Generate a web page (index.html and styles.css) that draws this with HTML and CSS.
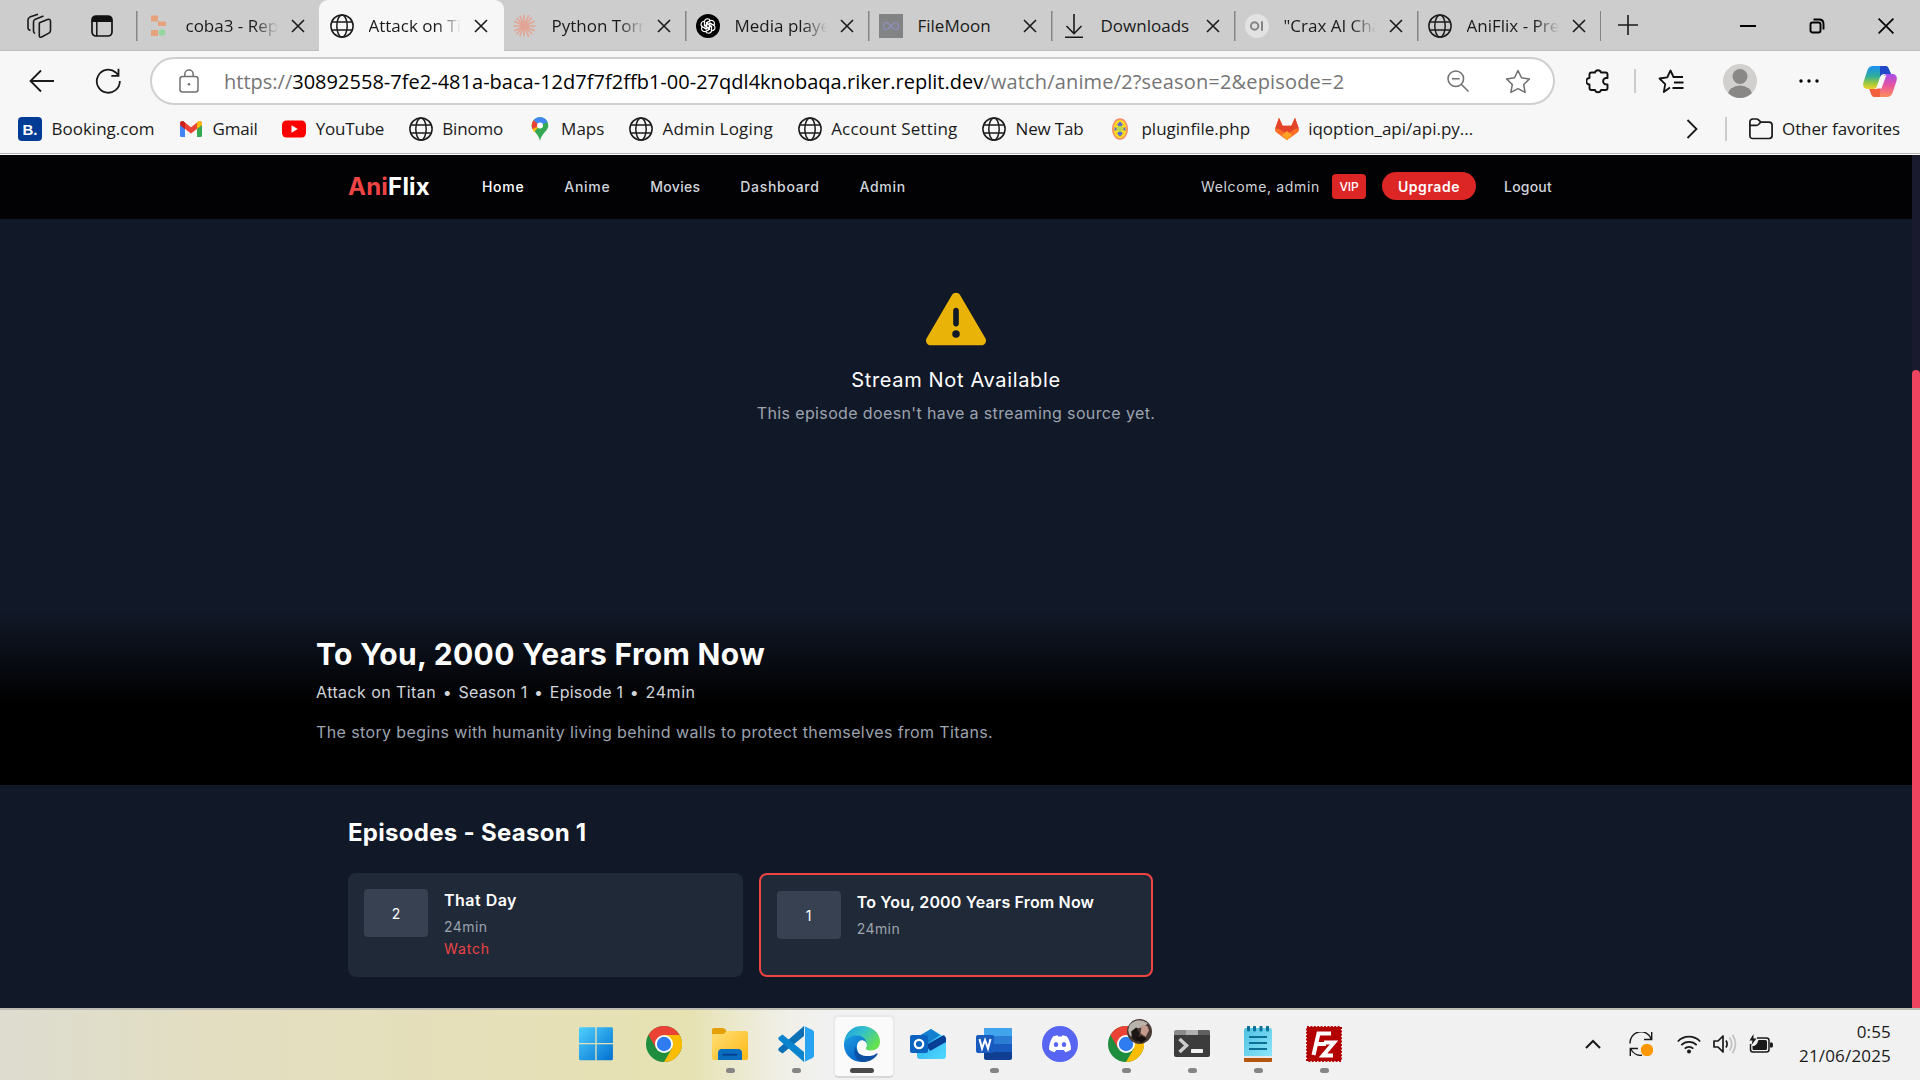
FILE: index.html
```html
<!DOCTYPE html>
<html lang="en">
<head>
<meta charset="utf-8">
<title>AniFlix</title>
<link rel="stylesheet" href="styles.css">
</head>
<body>
<svg width="0" height="0" class="defs">
  <defs>
    <linearGradient id="gWin" x1="0" y1="0" x2="1" y2="1"><stop offset="0" stop-color="#4fd0ff"/><stop offset="1" stop-color="#0270d0"/></linearGradient>
    <linearGradient id="gFolder" x1="0" y1="0" x2="1" y2="1"><stop offset="0" stop-color="#ffdf78"/><stop offset="1" stop-color="#fdb813"/></linearGradient>
    <linearGradient id="gEdgeTop" x1="0" y1="0" x2="1" y2=".6"><stop offset="0" stop-color="#1899e0"/><stop offset=".5" stop-color="#35c1c9"/><stop offset="1" stop-color="#66e04c"/></linearGradient>
    <linearGradient id="gEdgeLeft" x1="0" y1="0" x2=".6" y2="1"><stop offset="0" stop-color="#1b9de2"/><stop offset="1" stop-color="#0663c7"/></linearGradient>
    <linearGradient id="gOutlook" x1="0" y1="0" x2="1" y2="1"><stop offset="0" stop-color="#28a8ea"/><stop offset="1" stop-color="#50d9ff"/></linearGradient>
    <linearGradient id="gPad" x1="0" y1="0" x2="1" y2="1"><stop offset="0" stop-color="#4fc0e2"/><stop offset="1" stop-color="#8ce6fa"/></linearGradient>
    <linearGradient id="gCopA" x1="0" y1="0" x2="0" y2="1"><stop offset="0" stop-color="#1a8ff0"/><stop offset=".45" stop-color="#2fae9a"/><stop offset=".75" stop-color="#9fc93c"/><stop offset="1" stop-color="#f3d02a"/></linearGradient>
    <linearGradient id="gCopB" x1="0" y1="0" x2="0" y2="1"><stop offset="0" stop-color="#a44cf0"/><stop offset=".5" stop-color="#e8559c"/><stop offset="1" stop-color="#fb8f5a"/></linearGradient>
    <symbol id="globe" viewBox="0 0 24 24"><g fill="none" stroke="#1b1b1b" stroke-width="1.5"><circle cx="12" cy="12" r="11.1"/><ellipse cx="12" cy="12" rx="5.2" ry="11.1"/><path d="M1.8 8h20.4M1.8 16h20.4"/></g></symbol>
    <symbol id="close" viewBox="0 0 14 14"><path d="M1 1l12 12M13 1L1 13" fill="none" stroke="#1a1a1a" stroke-width="1.6"/></symbol>
    <symbol id="chrome" viewBox="0 0 36 36"><circle cx="18" cy="18" r="18" fill="#1e8e3e"/><path d="M18 9h15.6A18 18 0 0 1 18 36l7.8-13.5z" fill="#fbbc04"/><path d="M2.4 9L10.2 22.5L18 18L18 9H33.6A18 18 0 0 0 2.4 9z" fill="#ea4335"/><circle cx="18" cy="18" r="9" fill="#fff"/><circle cx="18" cy="18" r="7.2" fill="#2f7bf0"/></symbol>
  </defs>
</svg>

<header class="browser">
  <div class="tabstrip">
    <div class="strip-tools">
      <svg class="workspaces" width="26" height="26" viewBox="0 0 26 26" fill="none" stroke="#1a1a1a" stroke-width="1.6" stroke-linejoin="round"><path d="M12.500 9.200l8-3.300q3-.8 3 2v9q0 1.800-1.600 2.600l-7.300 3.900q-2.300 1-2.300-1.500V11q0-1.300.2-1.800z" transform="translate(1 .6)"/><path d="M9.200 20.500q-1.700-.3-1.700-2.500V9q0-2 1.800-2.800L17.500 3"/><path d="M4.500 17.500Q2 17 2 14.500V7q0-2 1.800-2.900L12 1.200"/></svg>
      <svg width="22" height="22" viewBox="0 0 22 22"><rect x="1" y="1" width="20" height="20" rx="4" fill="none" stroke="#111" stroke-width="1.7"/><path d="M1 7V5q0-4 4-4h12q4 0 4 4v2z" fill="#111"/><path d="M5.800 6v15" stroke="#111" stroke-width="1.5"/></svg>
    </div>
    <div class="tab first"><svg class="fav" viewBox="0 0 24 24"><path d="M4 1.500h7v6H4zM11 7.500h8v4.500h-8zM4 16h7v6H4z" fill="#e6a27c"/><circle cx="15" cy="18.500" r="3.300" fill="#93d6a0"/></svg><span class="t fade">coba3 - Replit</span><svg class="x"><use href="#close"/></svg></div>
    <div class="tab active"><svg class="fav"><use href="#globe"/></svg><span class="t fade">Attack on Titan</span><svg class="x"><use href="#close"/></svg></div>
    <div class="tab nosep"><svg class="fav" viewBox="0 0 24 24" stroke="#e2a595" stroke-width="1.7" stroke-linecap="round"><path d="M11 1.500v20M1 12h21M4 4.500l14.500 15M18.500 4L4 19.500M7 2l8.500 20M15.500 2L7 21.500M1.800 7.500l19.500 9M2 16.500L21 7.500"/></svg><span class="t fade">Python Torrent</span><svg class="x"><use href="#close"/></svg></div>
    <div class="tab"><svg class="fav" viewBox="0 0 24 24"><circle cx="12" cy="12" r="12" fill="#000"/><g fill="none" stroke="#fff" stroke-width="1.1"><path id="petal" d="M12 9.800l-3.600 2V7.600q.4-2.700 3-2.900 2.300.1 3 1.900l-3.800 2.200v3.900"/><use href="#petal" transform="rotate(60 12 12)"/><use href="#petal" transform="rotate(120 12 12)"/><use href="#petal" transform="rotate(180 12 12)"/><use href="#petal" transform="rotate(240 12 12)"/><use href="#petal" transform="rotate(300 12 12)"/></g></svg><span class="t fade">Media player</span><svg class="x"><use href="#close"/></svg></div>
    <div class="tab"><svg class="fav" viewBox="0 0 24 24"><rect width="24" height="24" fill="#828385"/><path d="M12 12q-2.500-3.500-5-3.500T4.500 12 7 15.500 12 12t5-3.500 2.500 3.500-2.500 3.500T12 12z" fill="none" stroke="#8f8fc4" stroke-width="1.2"/></svg><span class="t">FileMoon</span><svg class="x"><use href="#close"/></svg></div>
    <div class="tab"><svg class="fav" viewBox="0 0 24 24" fill="none" stroke="#1a1a1a" stroke-width="1.6"><path d="M12 0v19.500M4.500 12l7.500 7.700L19.500 12M3 23.200h18"/></svg><span class="t">Downloads</span><svg class="x"><use href="#close"/></svg></div>
    <div class="tab"><svg class="fav" viewBox="0 0 24 24"><circle cx="12" cy="12" r="12" fill="#e2e2e2"/><circle cx="9.600" cy="12" r="3.700" fill="none" stroke="#858585" stroke-width="2"/><path d="M17 7.300v9.400" stroke="#858585" stroke-width="2"/></svg><span class="t fade">"Crax AI Chat</span><svg class="x"><use href="#close"/></svg></div>
    <div class="tab last"><svg class="fav"><use href="#globe"/></svg><span class="t fade">AniFlix - Premium</span><svg class="x"><use href="#close"/></svg></div>
    <svg class="plus" viewBox="0 0 20 20"><path d="M10 0v20M0 10h20" stroke="#1a1a1a" stroke-width="1.6"/></svg>
    <div class="window-controls">
      <svg width="16" height="16" viewBox="0 0 16 16"><path d="M0 8h16" stroke="#000" stroke-width="2"/></svg>
      <svg width="16" height="16" viewBox="0 0 16 16" fill="none" stroke="#000" stroke-width="1.9"><rect x="1.500" y="4.500" width="10" height="10" rx="2"/><path d="M4.500 1.500H10q4.500 0 4.500 4.500v5.500"/></svg>
      <svg width="16" height="16" viewBox="0 0 16 16"><path d="M.6.6l14.800 14.800M15.400.6L.6 15.400" stroke="#000" stroke-width="1.7"/></svg>
    </div>
  </div>

  <div class="toolbar">
    <svg class="back" width="26" height="24" viewBox="0 0 26 24" fill="none" stroke="#1a1a1a" stroke-width="1.8"><path d="M25 12H2M12 1.500L1.500 12 12 22.500"/></svg>
    <svg class="reload" width="26" height="26" viewBox="0 0 26 26" fill="none" stroke="#1a1a1a" stroke-width="1.8"><path d="M24.800 13A11.500 11.500 0 1 1 20.800 4.500L23 7M23.500.8v7H16.300"/></svg>
    <div class="address">
      <svg class="lock" width="20" height="24" viewBox="0 0 20 24" fill="none" stroke="#707070" stroke-width="1.5"><rect x="1" y="7.500" width="18" height="15.500" rx="2.500"/><path d="M5.800 7.500V5.200a4.200 4.200 0 0 1 8.400 0v2.300"/><circle cx="10" cy="15.300" r="1.300" fill="#707070" stroke="none"/></svg>
      <div class="url"><span>https://</span><b>30892558-7fe2-481a-baca-12d7f7f2ffb1-00-27qdl4knobaqa.riker.replit.dev</b><span class="path">/watch/anime/2?season=2&amp;episode=2</span></div>
      <svg class="zoomout" width="22" height="22" viewBox="0 0 22 22" fill="none" stroke="#707070" stroke-width="1.5"><circle cx="8.800" cy="8.800" r="7.800"/><path d="M14.500 14.500l7 7M5 8.800h7.600"/></svg>
      <svg class="star" width="26" height="25" viewBox="0 0 26 25" fill="none" stroke="#707070" stroke-width="1.5" stroke-linejoin="round"><path d="M13 1.500l3.500 7.300 8 1.100-5.800 5.600 1.400 7.900L13 19.600l-7.100 3.800 1.400-7.900L1.500 9.900l8-1.100z"/></svg>
    </div>
    <svg class="ext" width="24" height="26" viewBox="0 0 24 26" fill="none" stroke="#111" stroke-width="1.9" stroke-linejoin="round"><path d="M5.500 4.500H9a3.100 3.100 0 0 1 6 0h4.500q2 0 2 2V10h-1.200a3.200 3.200 0 0 0 0 6.400h1.200v3.600q0 2-2 2H15a3.100 3.100 0 0 1-6 0H5.500q-2 0-2-2v-3.600a3.200 3.200 0 0 1 0-6.400V6.500q0-2 2-2z"/></svg>
    <i class="vsep"></i>
    <svg class="favs" width="26" height="25" viewBox="0 0 26 25" fill="none" stroke="#111" stroke-width="1.8" stroke-linejoin="round"><path d="M12 18.500L5.800 23l1.400-7.900L1.500 9.500l7.800-1.100L12.500 1.500l3 6.500h9.500M16 13.500h9.500M14.500 19h11"/></svg>
    <svg class="avatar" width="34" height="34" viewBox="0 0 34 34"><clipPath id="av"><circle cx="17" cy="17" r="17"/></clipPath><g clip-path="url(#av)"><rect width="34" height="34" fill="#d2d0ce"/><circle cx="17" cy="12.500" r="7.500" fill="#8a8886"/><ellipse cx="17" cy="31" rx="12" ry="9.500" fill="#8a8886"/></g></svg>
    <svg class="dots" width="20" height="4" viewBox="0 0 20 4"><circle cx="2" cy="2" r="1.700"/><circle cx="10" cy="2" r="1.700"/><circle cx="18" cy="2" r="1.700"/></svg>
    <svg class="copilot" width="34" height="31" viewBox="0 0 34 31"><path d="M10 0h12q3 0 3.800 3L28 8h-7q-3 0-4 3l-3 9q-1 3-4 3H4Q-1 22 .5 16L4.500 4Q6 0 10 0z" fill="url(#gCopA)"/><path d="M17 0h5q3 0 3.800 3L28 8h-7q-3 0-4 3z" fill="#2048c8"/><path d="M24 31H12q-3 0-3.800-3L6 23h7q3 0 4-3l3-9q1-3 4-3h6q5 1 3.500 7l-4 12q-1.500 4-5.500 4z" fill="url(#gCopB)"/><path d="M17 31h-5q-3 0-3.800-3L7 23h6q3 0 4-3z" fill="#f2603c"/><path d="M19.500 9.500h4l-1 2-4 11h-4l1-2z" fill="#f7f7f7"/></svg>
  </div>

  <nav class="bookmarks">
    <a><svg viewBox="0 0 24 24"><rect width="24" height="24" rx="4" fill="#003b95"/><text x="4.500" y="18" class="bk">B.</text></svg><span>Booking.com</span></a>
    <a class="tight"><svg viewBox="0 0 24 24"><path d="M1 6v12.500q0 1.500 1.500 1.500H6V10z" fill="#4285f4"/><path d="M23 6v12.500q0 1.500-1.500 1.500H18V10z" fill="#34a853"/><path d="M1 6.500q0-3 3-2.500l8 6.200L20 4q3-.5 3 2.500V8l-11 8.500L1 8z" fill="#ea4335"/><path d="M18 5.600L20 4q3-.5 3 2.500V8l-5 4z" fill="#fbbc04"/><path d="M1 6.500q0-3 3-2.500l2 1.600V12L1 8z" fill="#c5221f"/></svg><span>Gmail</span></a>
    <a class="tight"><svg viewBox="0 0 24 24"><rect y="3.500" width="24" height="17" rx="4.500" fill="#f00"/><path d="M9.500 8.300v7.400l6.300-3.700z" fill="#fff"/></svg><span>YouTube</span></a>
    <a class="tight"><svg><use href="#globe"/></svg><span>Binomo</span></a>
    <a><svg viewBox="0 0 24 24"><path d="M12 0a8.300 8.300 0 0 1 8.300 8.500C20.300 14 13.500 16 12 24 10.500 16 3.700 14 3.700 8.500A8.300 8.300 0 0 1 12 0z" fill="#34a853"/><path d="M3.700 8.500q0-3 2-5.300L12 8.500 6 15Q3.700 12 3.700 8.500z" fill="#fbbc04"/><path d="M5.700 3.200L12 8.500 4.500 12Q2.500 7 5.700 3.200z" fill="#ea4335"/><path d="M5.700 3.200A8.300 8.300 0 0 1 19.500 5L12 8.500z" fill="#4285f4"/><circle cx="12" cy="8.500" r="3" fill="#fff"/></svg><span>Maps</span></a>
    <a class="loose"><svg><use href="#globe"/></svg><span>Admin Loging</span></a>
    <a class="loose"><svg><use href="#globe"/></svg><span>Account Setting</span></a>
    <a class="tight"><svg><use href="#globe"/></svg><span>New Tab</span></a>
    <a><svg viewBox="0 0 24 24"><ellipse cx="12" cy="12" rx="7.300" ry="10" fill="#ffd91f" stroke="#f58b6b" stroke-width="1.5"/><path d="M12 4.500l3 3-3 3-3-3zM12 13.500l3 3-3 3-3-3z" fill="#5a6fd0"/><circle cx="12" cy="12" r="3" fill="#b8d84a"/><path d="M6.500 10.500h2v3h-2zM15.500 10.500h2v3h-2z" fill="#5a6fd0"/></svg><span>pluginfile.php</span></a>
    <a><svg viewBox="0 0 24 24"><path d="M4 .8L.2 11.500q-.7 2.500 1.300 4L12 23.300l10.500-7.800q2-1.500 1.300-4L20 .8l-3.600 8H7.600z" fill="#fc6d26"/><path d="M4 .8L.2 11.500q2.800-.4 5.300 1.300L12 17.500l6.500-4.700q2.500-1.700 5.300-1.300L20 .8l-3.600 8H7.600z" fill="#e24329"/><path d="M12 14l5 4-5 5.300L7 18z" fill="#fca326"/></svg><span>iqoption_api/api.py...</span></a>
    <svg class="more" width="12" height="20" viewBox="0 0 12 20" fill="none" stroke="#1a1a1a" stroke-width="1.8"><path d="M1.500 1l9 9-9 9"/></svg>
    <i class="vsep"></i>
    <a class="other"><svg viewBox="0 0 24 24" fill="none" stroke="#1a1a1a" stroke-width="1.7"><path d="M.9 18.500V5q0-3 3-3h3.600q1.200 0 2 .8l2.400 2.400H20q3.100 0 3.100 3v10.300q0 3-3.100 3H3.900q-3 0-3-3zM1 8.300h6.500q1.200 0 2-.8l2.200-2.300"/></svg><span>Other favorites</span></a>
  </nav>
</header>

<main class="page">
  <div class="site">
    <div class="navbar"><div class="container">
      <div class="logo"><em>Ani</em>Flix</div>
      <div class="links"><a class="on">Home</a><a>Anime</a><a class="movies">Movies</a><a>Dashboard</a><a>Admin</a></div>
      <div class="user"><span class="welcome">Welcome, admin</span><span class="vip">VIP</span><a class="upgrade">Upgrade</a><a class="logout">Logout</a></div>
    </div></div>
    <section class="player">
      <svg width="60" height="60" viewBox="0 0 512 512" fill="#eab308"><path d="M256 32c14.200 0 27.300 7.500 34.500 19.800l216 368c7.300 12.400 7.300 27.700.2 40.100S486.300 480 472 480H40c-14.300 0-27.600-7.700-34.700-20.100s-7-27.800.2-40.100l216-368C228.700 39.500 241.800 32 256 32zm0 128c-13.300 0-24 10.700-24 24V296c0 13.300 10.700 24 24 24s24-10.700 24-24V184c0-13.300-10.700-24-24-24zm32 224a32 32 0 1 0-64 0 32 32 0 1 0 64 0z"/></svg>
      <h3>Stream Not Available</h3>
      <p>This episode doesn't have a streaming source yet.</p>
    </section>
    <section class="info"><div class="inner">
      <h1>To You, 2000 Years From Now</h1>
      <div class="meta"><span class="show">Attack on Titan</span><i>•</i><span>Season 1</span><i>•</i><span>Episode 1</span><i>•</i><span class="length">24min</span></div>
      <p>The story begins with humanity living behind walls to protect themselves from Titans.</p>
    </div></section>
    <section class="episodes">
      <h2>Episodes - Season 1</h2>
      <div class="grid">
        <article class="card"><div class="thumb">2</div><div class="text"><h4 class="short">That Day</h4><p>24min</p><a>Watch</a></div></article>
        <article class="card current"><div class="thumb">1</div><div class="text"><h4>To You, 2000 Years From Now</h4><p>24min</p></div></article>
      </div>
    </section>
  </div>
  <div class="scrollbar"><div class="thumbbar"></div></div>
</main>

<footer class="taskbar">
  <div class="apps">
    <div class="app start"><svg viewBox="0 0 36 36"><path d="M2 .5h15.300v16.300H.5V2Q.5.5 2 .5zM18.700.5H34q1.500 0 1.500 1.500v14.800H18.700zM.5 18.200h16.800v16.300H2Q.5 34.500.5 33zM18.700 18.200h16.800V33q0 1.500-1.500 1.500H18.700z" transform="translate(.5 .7) scale(.97)" fill="url(#gWin)"/></svg></div>
    <div class="app"><svg><use href="#chrome"/></svg></div>
    <div class="app run"><svg viewBox="0 0 36 36"><path d="M0 4q0-2 2-2h9q1.500 0 2.500 1.500L15 6v6H0z" fill="#e3a008"/><path d="M0 9q0-1 1.200-1H11q1 0 2-1.200L14 5.500q.5-.5 1.500-.5H34q2 0 2 2v25q0 2-2 2H2q-2 0-2-2z" fill="url(#gFolder)"/><path d="M6 34v-7q0-4 4-4h16q4 0 4 4v7z" fill="#0a6cbf"/><path d="M10.500 28.700h14.500" stroke="#053f8a" stroke-width="1.800"/></svg></div>
    <div class="app run"><svg viewBox="0 0 36 36"><path d="M26 0v10L4.500 27.500 1 25q-1.500-1.200 0-3z" fill="#0a6fb5"/><path d="M26 36V26L4.500 8.500 1 11q-1.500 1.200 0 3z" fill="#0a84cf"/><path d="M26 0l8.500 4q1.500.7 1.500 2.500v23q0 1.800-1.500 2.500L26 36q1 0 1-3V3q0-3-1-3z" fill="#27a3f2"/></svg></div>
    <div class="app focus"><svg viewBox="0 0 36 36"><path d="M0 17C1 6 9 0 18 0c10 0 18 7 18 15.500 0 6-4 9-9.500 9-3.500 0-5.500-1.500-4.500-3 1.500-2 .5-8-6-8Q6 11 0 17z" fill="url(#gEdgeTop)"/><path d="M0 17C3 11 9 9 14 9.500c5 .5 8.500 4 8.500 8-1-3-4.500-4-7-2.500-5 4-3 15 8 20C10 39-1 29 0 17z" fill="url(#gEdgeLeft)"/><path d="M11.500 20C12 29 20 30.500 26 30q4-.5 6.500-2.500 1.500-.5 1 .7C30 34 23 36.500 18 36 11 34 9 26 11.500 20z" fill="#0c4fa3"/><path d="M15 17q2-3.500 6-1.500 3 3 .5 6.500-1 2 3 3-7 2-9.500-8z" fill="#fafafa"/></svg></div>
    <div class="app"><svg viewBox="0 0 36 36"><path d="M7 12L21 3l15 9v18q0 3-3 3H10q-3 0-3-3z" fill="url(#gOutlook)"/><path d="M7 11L21 3l9 6-14 10z" fill="#1580cf"/><path d="M16 19L34 9l2 3v4L20 25z" fill="#063f96"/><rect y="9" width="18" height="18" rx="2" fill="#0a63bf"/><circle cx="9" cy="18" r="4.200" fill="none" stroke="#fff" stroke-width="2.300"/></svg></div>
    <div class="app run"><svg viewBox="0 0 36 36"><rect x="8" y="2" width="28" height="32" rx="2" fill="#103f91"/><path d="M8 26V18h28v8z" fill="#185abd"/><path d="M8 18v-8h28v8z" fill="#2b7cd3"/><path d="M8 10V4q0-2 2-2h24q2 0 2 2v6z" fill="#41a5ee"/><rect y="9" width="18" height="18" rx="2" fill="#185abd"/><path d="M3.500 13l2.500 9.500 3-8.500 3 8.500 2.500-9.500" fill="none" stroke="#fff" stroke-width="2"/></svg></div>
    <div class="app"><svg viewBox="0 0 36 36"><circle cx="18" cy="18" r="18" fill="#5865f2"/><path d="M11 10.500q2-1 4.500-1.300l.8 1.400h3.400l.8-1.400q2.500.3 4.500 1.300 4 6 4 13-2.500 2.300-5.800 2.800l-1.300-2.300h-7.800l-1.300 2.300Q9.500 25.800 7 23.500q0-7 4-13z" fill="#fff"/><ellipse cx="14" cy="18.500" rx="2.200" ry="2.500" fill="#5865f2"/><ellipse cx="22" cy="18.500" rx="2.200" ry="2.500" fill="#5865f2"/></svg></div>
    <div class="app run"><svg><use href="#chrome"/></svg><svg class="badge" viewBox="0 0 24 24"><circle cx="12" cy="12" r="12" fill="#4a3a35"/><path d="M3 5q8-7 17-1l-4 4-8 1-4 8Q-1 12 3 5z" fill="#b9b3ad"/><path d="M4 12l5-4 3 6-2 8-5-3z" fill="#1c1615"/><path d="M14 6q6-1 7 5l-3 6-5-3z" fill="#c39a8b"/><path d="M8 19l6-3 5 3-5 4z" fill="#16100f"/></svg></div>
    <div class="app run"><svg viewBox="0 0 36 36"><path d="M0 9V6q0-2 2-2h32q2 0 2 2v3z" fill="#8a8a8a"/><path d="M12 4h12v5H12z" fill="#b0b0b0"/><path d="M24 4h10q2 0 2 2v3H24z" fill="#606060"/><path d="M0 9h36v20q0 2-2 2H2q-2 0-2-2z" fill="#3c3c3c"/><path d="M5.500 13l7 6.500-7 6.500" fill="none" stroke="#ccc" stroke-width="3.500"/><rect x="17" y="23" width="12" height="4" rx=".8" fill="#f0f0f0"/></svg></div>
    <div class="app run"><svg viewBox="0 0 36 36"><path d="M4 30h28v5q0 1-1 1H5q-1 0-1-1z" fill="#b4560f"/><path d="M4 29h28v3H4z" fill="#e8e8e8"/><path d="M4 4q0-2 2-2h24q2 0 2 2v26H4z" fill="url(#gPad)"/><path d="M9 11h18M9 17h18M9 23h18" stroke="#0b6f96" stroke-width="2"/><path d="M8.500 1v3M14.500 1v3M21 1v3M27.500 1v3" stroke="#0b6f96" stroke-width="3" stroke-linecap="round"/></svg></div>
    <div class="app run"><svg viewBox="0 0 36 36"><rect x="1" y="1" width="34" height="34" fill="#b30000" stroke="#b30000" stroke-width="2" stroke-dasharray="2 1.400"/><path d="M7.500 29L12.500 7.500H25M10 18h10M18 16.500h10L17 29.500h10" fill="none" stroke="#fff" stroke-width="4"/></svg></div>
  </div>
  <div class="tray">
    <svg class="up" width="16" height="10" viewBox="0 0 16 10"><path d="M1 9l7-7 7 7" fill="none" stroke="#1a1a1a" stroke-width="2"/></svg>
    <svg class="sync" width="24" height="24" viewBox="0 0 24 24" fill="none" stroke="#1a1a1a" stroke-width="1.4"><path d="M1 11.500A11 11 0 0 1 22.300 7M22.700 0v7.500H15M1.300 24v-7.500H9M1.800 17A11 11 0 0 0 13 23.300"/><circle cx="18" cy="18" r="6.200" fill="#ff9800" stroke="none"/></svg>
    <svg class="wifi" width="24" height="20" viewBox="0 0 24 20" fill="none" stroke="#1a1a1a" stroke-width="1.7"><path d="M.8 7.500a15.500 15.500 0 0 1 22.400 0M4.300 11.200a10.800 10.800 0 0 1 15.400 0M7.700 14.600a6 6 0 0 1 8.600 0"/><circle cx="12" cy="17.500" r="2" fill="#1a1a1a" stroke="none"/></svg>
    <svg class="vol" width="24" height="20" viewBox="0 0 24 20" fill="none" stroke="#1a1a1a" stroke-width="1.7" stroke-linejoin="round"><path d="M1 7h4l5-5v16l-5-5H1zM13 6.500q2.200 3.500 0 7"/><path d="M16.500 3.500q4.500 6.500 0 13M19.500.8q6 9.200 0 18.400" stroke="#c0c0c0"/></svg>
    <svg class="bat" width="24" height="20" viewBox="0 0 24 20"><path d="M8 4h9.500Q20 4 20 6.500v9q0 2.500-2.500 2.500H4q-2.500 0-2.500-2.500V10" fill="none" stroke="#1a1a1a" stroke-width="1.5"/><path d="M9.500 6h7q1.500 0 1.500 1.500v7q0 1.500-1.500 1.500h-12Q3.500 16 3.500 14.500V12q4 .5 6-6zM21 8.500h2q1 0 1 2.500t-1 2.500h-2zM4.500 0L.5 6.500h3L2.500 11l5-6.500H4.500z" fill="#1a1a1a"/></svg>
    <div class="clock"><span>0:55</span><span>21/06/2025</span></div>
  </div>
</footer>
</body>
</html>
```
FILE: styles.css
```css
* { box-sizing: border-box; margin: 0; padding: 0; }
body {
  width: 1920px; height: 1080px; overflow: hidden;
  display: flex; flex-direction: column;
  font-family: "Open Sans", "Noto Sans", sans-serif; color: #1a1a1a;
}
svg { display: block; flex: none; }
.defs { position: absolute; }
em, i { font-style: normal; }

/* Browser chrome */
.browser { height: 155px; background: #f7f7f7; border-bottom: 1px solid #fff; box-shadow: inset 0 -1px #b4b4b4; flex: none; }
.tabstrip { height: 51px; background: #cdcdcd; display: flex; align-items: center; box-shadow: inset 0 -1px #bdbdbd; }
.strip-tools { width: 136px; flex: none; display: flex; align-items: center; gap: 39px; padding-left: 26px; }
.tab { width: 183px; height: 51px; flex: none; display: flex; align-items: center; padding-left: 11px; font-size: 17px; background: linear-gradient(#858585, #858585) left 50% / 1.5px 30px no-repeat; }
.tab .fav { width: 24px; height: 24px; margin-right: 14.5px; }
.tab .t { width: 94px; overflow: hidden; white-space: nowrap; }
.tab .fade { -webkit-mask-image: linear-gradient(90deg, #000 72%, transparent 98%); mask-image: linear-gradient(90deg, #000 72%, transparent 98%); }
.tab .x { width: 14px; height: 14px; margin-left: 11px; }
.tab.active { background: #f7f7f7; border-radius: 9px 9px 0 0; width: 185px; margin-right: -2px; }
.tab.nosep { background: none; }
.tab.last { width: 184px; background: linear-gradient(#858585, #858585) left 50% / 1.5px 30px no-repeat, linear-gradient(#858585, #858585) right 50% / 1.5px 30px no-repeat; }
.plus { width: 20px; height: 20px; margin: 0 0 1px 17px; }
.window-controls { margin-left: auto; display: flex; gap: 53px; padding-right: 26px; }

.toolbar { height: 58px; padding-top: 2px; display: flex; align-items: center; }
.back { margin: 0 0 1px 29px; }
.reload { margin-left: 40px; }
.address { width: 1405px; height: 48px; flex: none; margin-left: 29px; border: 2px solid #cfcfcf; border-radius: 24px; background: #fff; display: flex; align-items: center; }
.lock { margin: 0 0 1px 27px; }
.url { margin-left: 25px; font-size: 20px; white-space: nowrap; color: #757575; display: flex; width: 1121px; }
.url b { font-weight: 400; color: #000; letter-spacing: .017px; }
.url .path { letter-spacing: .17px; }
.zoomout { margin: 0 0 1px 102px; }
.star { margin-left: 36px; }
.ext { margin-left: 31px; }
.vsep { width: 1.5px; height: 24px; background: #ccc; }
.toolbar .vsep { margin-left: 24px; }
.favs { margin-left: 22px; }
.avatar { margin-left: 39px; }
.dots { margin-left: 42px; }
.copilot { margin-left: 44px; }

.bookmarks { display: flex; align-items: center; height: 40px; padding-left: 18px; font-size: 17px; }
.bookmarks a { display: flex; align-items: center; margin-right: 24.600px; white-space: nowrap; }
.bookmarks a svg { width: 24px; height: 24px; margin-right: 9.500px; }
.bookmarks a span { margin-top: -1px; }
.bookmarks .tight { letter-spacing: -.2px; }
.bookmarks .loose { letter-spacing: .19px; }
.bk { font: 700 15px "Liberation Sans", sans-serif; fill: #fff; }
.more { margin-left: auto; }
.bookmarks .vsep { margin: 0 22px 0 27px; }
.bookmarks .other { margin-right: 20px; letter-spacing: -.097px; }

/* Site */
.page { height: 853px; flex: none; display: flex; background: #111827; font-family: Inter, "Open Sans", sans-serif; }
.site { flex: 1; }
.navbar { height: 64px; background: #020204; }
.container { width: 1280px; height: 64px; margin: 0 auto; padding: 0 32px 2px; display: flex; align-items: center; font-size: 14px; font-weight: 500; color: #d1d5db; }
.logo { font-size: 24px; font-weight: 700; color: #fff; letter-spacing: .23px; }
.logo em { color: #ef4444; }
.links { display: flex; gap: 40px; margin-left: 52px; letter-spacing: .69px; }
.links .on { color: #fff; }
.links .movies { letter-spacing: .28px; }
.user { margin-left: auto; display: flex; align-items: center; padding-right: 12px; }
.welcome { font-weight: 400; letter-spacing: .657px; }
.vip { margin-left: 12px; width: 34px; height: 25px; border-radius: 4px; background: #dc2626; color: #fff; font-size: 12px; letter-spacing: -.16px; display: grid; place-items: center; }
.upgrade { margin-left: 16px; width: 94px; height: 28px; border-radius: 14px; background: #dc2626; color: #fff; font-weight: 600; letter-spacing: .53px; display: grid; place-items: center; }
.logout { margin-left: 28px; letter-spacing: .216px; }

.player { height: 385px; padding-top: 70px; display: flex; flex-direction: column; align-items: center; }
.player h3 { font-size: 20px; font-weight: 400; line-height: 28px; color: #fff; margin-top: 17px; letter-spacing: .649px; }
.player p { font-size: 16px; line-height: 24px; color: #9ca3af; margin-top: 7px; letter-spacing: .372px; }

.info { height: 181px; background: linear-gradient(#111827 7px, #000 101px); }
.inner { width: 1280px; margin: 0 auto; padding-top: 32px; }
.info h1 { font-size: 30px; font-weight: 700; line-height: 36px; color: #fff; letter-spacing: .337px; }
.meta { display: flex; font-size: 16px; line-height: 24px; color: #d1d5db; margin-top: 8px; letter-spacing: .2px; }
.meta .show { letter-spacing: .414px; }
.meta .length { letter-spacing: .563px; }
.meta i { width: 22.5px; text-align: center; }
.info p { color: #9ca3af; font-size: 16px; line-height: 24px; margin-top: 16px; letter-spacing: .381px; }

.episodes { width: 1280px; margin: 0 auto; padding: 32px 32px 0; }
.episodes h2 { font-size: 24px; font-weight: 700; line-height: 32px; color: #fff; margin-bottom: 24px; letter-spacing: .281px; }
.grid { display: grid; grid-template-columns: repeat(3, 1fr); gap: 16px; }
.card { height: 104px; padding: 16px; border-radius: 8px; background: #1f2937; display: flex; gap: 16px; }
.card.current { border: 2px solid #ef4444; }
.thumb { width: 64px; height: 48px; border-radius: 4px; background: #374151; color: #fff; font-size: 14px; display: grid; place-items: center; }
.text h4 { font-size: 16px; font-weight: 600; line-height: 22px; color: #fff; letter-spacing: .165px; }
.text .short { letter-spacing: .484px; }
.text p { font-size: 14px; line-height: 20px; color: #9ca3af; margin-top: 6px; letter-spacing: .441px; }
.text a { display: block; font-size: 14px; line-height: 20px; color: #ef4444; margin-top: 2px; letter-spacing: .866px; }

.scrollbar { width: 8px; background: #1a1a2e; padding-top: 215px; }
.thumbbar { height: 638px; background: #ef4460; border-radius: 4px 4px 0 0; }

/* Taskbar */
.taskbar { height: 72px; flex: none; display: flex; align-items: flex-start; border-top: 2px solid #bdbcb4; background: linear-gradient(90deg, #dddccf 0, #e3dec1 220px, #e5e0b8 500px, #e6e2b2 690px, #f0efe6 780px, #f1f1f1 830px); background-clip: padding-box; }
.apps { display: flex; padding-left: 563px; }
.app { width: 66px; height: 70px; padding-top: 16px; position: relative; display: flex; justify-content: center; }
.app.start { margin-right: 2px; }
.app > svg { width: 36px; height: 36px; z-index: 1; }
.app.run::after, .app.focus::after { content: ""; position: absolute; z-index: 1; bottom: 7px; left: 28.5px; width: 9px; height: 5px; border-radius: 2.5px; background: #858585; }
.app.focus::after { left: 21px; width: 24px; background: #4a4a4a; }
.app.focus::before { content: ""; position: absolute; left: 4px; top: 5px; width: 58px; height: 59px; border-radius: 6px; background: #fafafa; border: 2px solid #e9e9e9; border-bottom-color: #d8d8d8; }
.app > .badge { position: absolute; width: 25px; height: 25px; left: 34px; top: 9px; }
.tray { margin-left: auto; display: flex; align-items: center; height: 68px; padding-right: 29px; }
.sync { margin-left: 28px; }
.wifi { margin-left: 24px; }
.vol, .bat { margin-left: 12px; }
.clock { margin-left: 26px; width: 92px; display: flex; flex-direction: column; align-items: flex-end; font-size: 17px; line-height: 24.5px; letter-spacing: .177px; white-space: nowrap; }
```
